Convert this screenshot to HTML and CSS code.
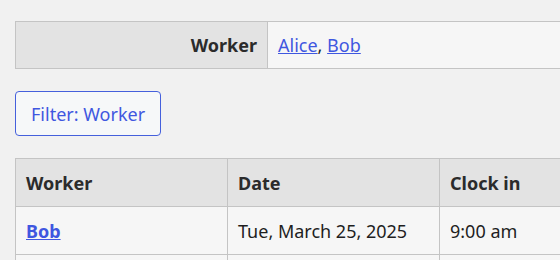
FILE: index.html
```html
<!DOCTYPE html>
<html>
<head>
<meta charset="utf-8">
<link rel="stylesheet" href="styles.css">
</head>
<body>
<div class="page">
  <table class="detail">
    <tr>
      <th class="detail-head">Worker</th>
      <td class="detail-value"><a href="#">Alice</a>, <a href="#">Bob</a></td>
    </tr>
  </table>
  <div class="actions">
    <button class="filter-btn">Filter: Worker</button>
  </div>
  <table class="list">
    <thead>
      <tr>
        <th class="col">Worker</th>
        <th class="col">Date</th>
        <th class="col">Clock in</th>
      </tr>
    </thead>
    <tbody>
      <tr>
        <td><a class="strong-link" href="#">Bob</a></td>
        <td>Tue, March 25, 2025</td>
        <td>9:00 am</td>
      </tr>
      <tr>
        <td>&nbsp;</td>
        <td>&nbsp;</td>
        <td>&nbsp;</td>
      </tr>
    </tbody>
  </table>
</div>
</body>
</html>
```

FILE: styles.css
```css
html, body {
  margin: 0;
  padding: 0;
  background: #f1f1f1;
  font-family: "Noto Sans", "Open Sans", sans-serif;
  font-size: 18px;
  color: #1e1e1e;
  overflow: hidden;
}
.page {
  padding: 21px 0 0 15px;
  width: 560px;
}
table {
  border-collapse: collapse;
}
.detail {
  width: 600px;
}
.detail th, .detail td {
  border: 1px solid #c4c4c4;
  height: 47px;
  padding: 0 10px;
  box-sizing: border-box;
}
.detail-head {
  width: 252px;
  background: #e3e3e3;
  text-align: right;
  font-weight: 700;
  color: #2b2b2b;
}
.detail-value {
  background: #f6f6f6;
  text-align: left;
}
a {
  color: #3f57e0;
}
.actions {
  padding: 22px 0 22px;
}
.filter-btn {
  display: block;
  font: inherit;
  color: #3f57e0;
  background: #f6f8f9;
  border: 1px solid #4560dc;
  border-radius: 4px;
  height: 45px;
  padding: 0 15px;
}
.list {
  width: 637px;
  table-layout: fixed;
}
.list th, .list td {
  border: 1px solid #c4c4c4;
  height: 48px;
  padding: 0 10px;
  text-align: left;
  box-sizing: border-box;
}
.list th {
  background: #e3e3e3;
  font-weight: 700;
  color: #2b2b2b;
}
.list td {
  background: #f6f6f6;
}
.col {
  width: 212px;
}
.strong-link {
  font-weight: 700;
}
```
